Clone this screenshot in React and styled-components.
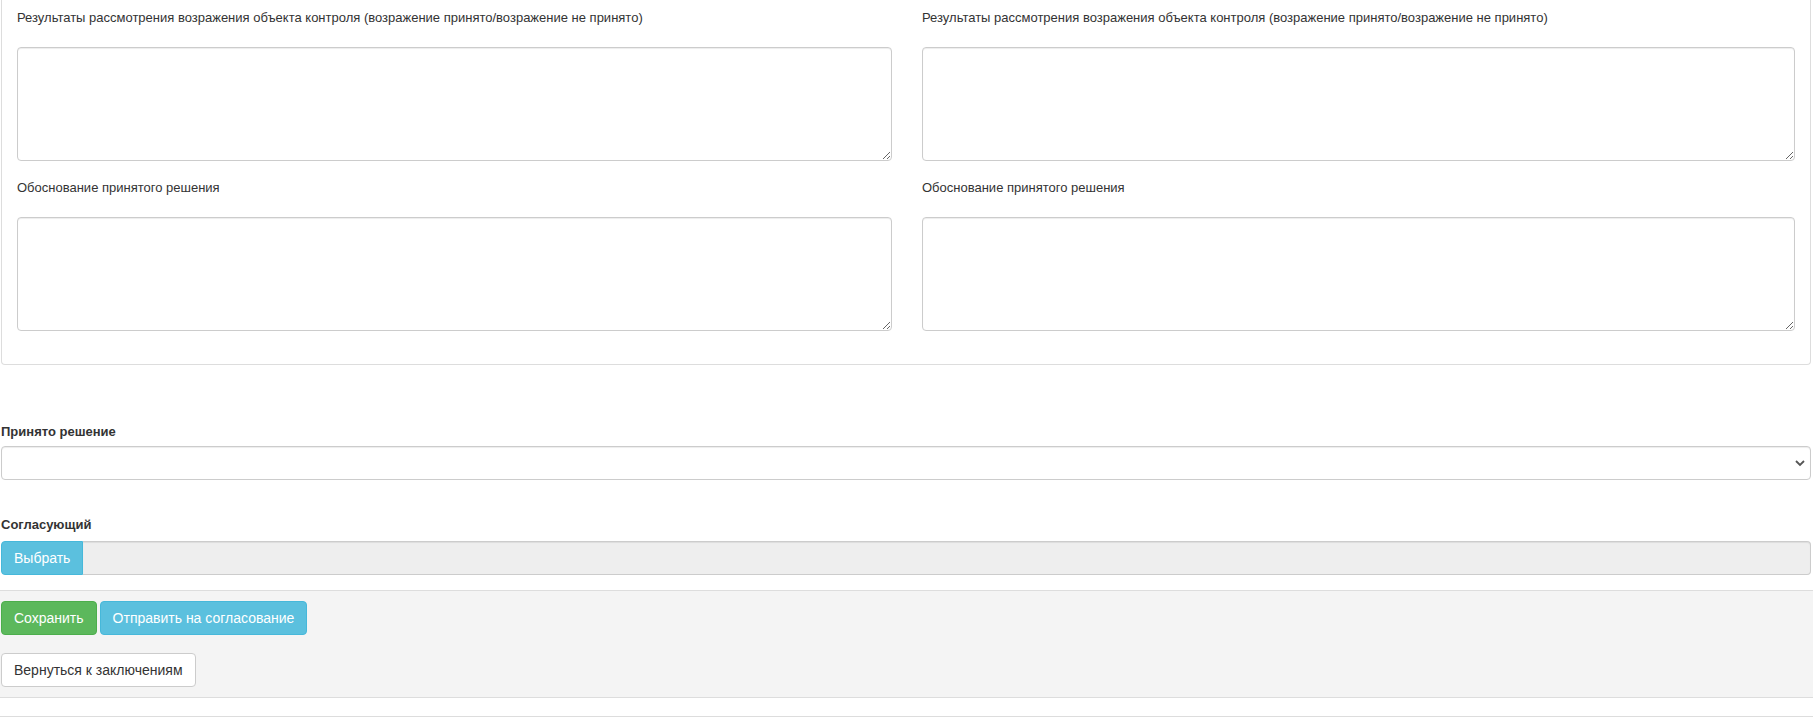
import React from "react";
import styled, { createGlobalStyle } from "styled-components";

const Global = createGlobalStyle`
  html, body { margin: 0; padding: 0; background: #fff; }
  body {
    font-family: "Liberation Sans", Arial, Helvetica, sans-serif;
    font-size: 14px;
    color: #333;
  }
  * { box-sizing: border-box; }
`;

const Page = styled.div`
  padding: 0 2px 0 1px;
`;

const Panel = styled.div`
  border: 1px solid #ddd;
  border-top: 0;
  border-radius: 0 0 4px 4px;
  padding: 8px 15px 16px;
  background: #fff;
`;

const PanelGrid = styled.div`
  display: grid;
  grid-template-columns: calc(50% - 14px) 1fr;
  column-gap: 30px;
`;

const Column = styled.div`
  display: flex;
  flex-direction: column;
`;

const FieldGroup = styled.div`
  display: flex;
  flex-direction: column;
  margin-bottom: 17px;
`;

const FieldLabel = styled.label`
  display: block;
  font-size: 13px;
  line-height: 20px;
  font-weight: ${(p) => (p.$bold ? 700 : 400)};
  color: #333;
  margin-bottom: ${(p) => p.$gap}px;
`;

const TextArea = styled.textarea`
  display: block;
  width: 100%;
  height: 114px;
  border: 1px solid #ccc;
  border-radius: 4px;
  box-shadow: inset 0 1px 1px rgba(0, 0, 0, 0.075);
  font-family: inherit;
  font-size: 14px;
  padding: 6px 12px;
  resize: both;
  background: #fff;
  margin: 0;
`;

const Section = styled.div`
  margin-top: ${(p) => p.$top}px;
`;

const SelectWrap = styled.div`
  position: relative;
  height: 34px;
`;

const Select = styled.select`
  display: block;
  width: 100%;
  height: 34px;
  border: 1px solid #ccc;
  border-radius: 4px;
  box-shadow: inset 0 1px 1px rgba(0, 0, 0, 0.075);
  background: #fff;
  appearance: none;
  -webkit-appearance: none;
  font-family: inherit;
  font-size: 14px;
  padding: 6px 12px;
  color: #555;
  margin: 0;
`;

const Chevron = styled.svg`
  position: absolute;
  right: 6px;
  top: 13px;
  pointer-events: none;
`;

const InputGroup = styled.div`
  display: flex;
  height: 34px;
`;

const AddonButton = styled.button`
  flex: none;
  height: 34px;
  padding: 6px 12px;
  font-family: inherit;
  font-size: 14px;
  line-height: 20px;
  color: #fff;
  background: #5bc0de;
  border: 1px solid #46b8da;
  border-radius: 4px 0 0 4px;
  margin: 0;
`;

const ReadonlyInput = styled.input`
  flex: 1;
  height: 34px;
  border: 1px solid #ccc;
  border-left: 0;
  border-radius: 0 4px 4px 0;
  background: #eee;
  box-shadow: inset 0 1px 1px rgba(0, 0, 0, 0.075);
  font-family: inherit;
  font-size: 14px;
  padding: 6px 12px;
  margin: 0;
`;

const ActionBand = styled.div`
  margin-top: 15px;
  background: #f4f4f4;
  border-top: 1px solid #ddd;
  border-bottom: 1px solid #ddd;
  padding: 10px 1px;
  display: flex;
  flex-direction: column;
  gap: 18px;
`;

const ButtonRow = styled.div`
  display: flex;
  gap: 3px;
`;

const Btn = styled.button`
  height: 34px;
  padding: 6px 12px;
  font-family: inherit;
  font-size: 14px;
  line-height: 20px;
  border-radius: 4px;
  margin: 0;
  cursor: pointer;
  color: ${(p) => (p.$variant === "default" ? "#333" : "#fff")};
  background: ${(p) =>
    p.$variant === "success" ? "#5cb85c" : p.$variant === "info" ? "#5bc0de" : "#fff"};
  border: 1px solid
    ${(p) =>
      p.$variant === "success" ? "#4cae4c" : p.$variant === "info" ? "#46b8da" : "#ccc"};
`;

const BottomRule = styled.div`
  margin-top: 18px;
  border-top: 1px solid #ddd;
`;

const panelColumns = [
  [
    "Результаты рассмотрения возражения объекта контроля (возражение принято/возражение не принято)",
    "Обоснование принятого решения",
  ],
  [
    "Результаты рассмотрения возражения объекта контроля (возражение принято/возражение не принято)",
    "Обоснование принятого решения",
  ],
];

export default function App() {
  return (
    <>
      <Global />
      <Page>
        <Panel>
          <PanelGrid>
            {panelColumns.map((col, ci) => (
              <Column key={ci}>
                {col.map((label, li) => (
                  <FieldGroup key={li}>
                    <FieldLabel $gap={19}>{label}</FieldLabel>
                    <TextArea />
                  </FieldGroup>
                ))}
              </Column>
            ))}
          </PanelGrid>
        </Panel>

        <Section $top={57}>
          <FieldLabel $bold $gap={4}>Принято решение</FieldLabel>
          <SelectWrap>
            <Select defaultValue="">
              <option value=""></option>
            </Select>
            <Chevron width="10" height="8" viewBox="0 0 10 8">
              <path d="M1 2 L5 6 L9 2" fill="none" stroke="#555" strokeWidth="1.8" />
            </Chevron>
          </SelectWrap>
        </Section>

        <Section $top={35}>
          <FieldLabel $bold $gap={6}>Согласующий</FieldLabel>
          <InputGroup>
            <AddonButton type="button">Выбрать</AddonButton>
            <ReadonlyInput readOnly />
          </InputGroup>
        </Section>
      </Page>

      <ActionBand>
        <ButtonRow>
          <Btn $variant="success" type="button">Сохранить</Btn>
          <Btn $variant="info" type="button">Отправить на согласование</Btn>
        </ButtonRow>
        <ButtonRow>
          <Btn $variant="default" type="button">Вернуться к заключениям</Btn>
        </ButtonRow>
      </ActionBand>
      <BottomRule />
    </>
  );
}
